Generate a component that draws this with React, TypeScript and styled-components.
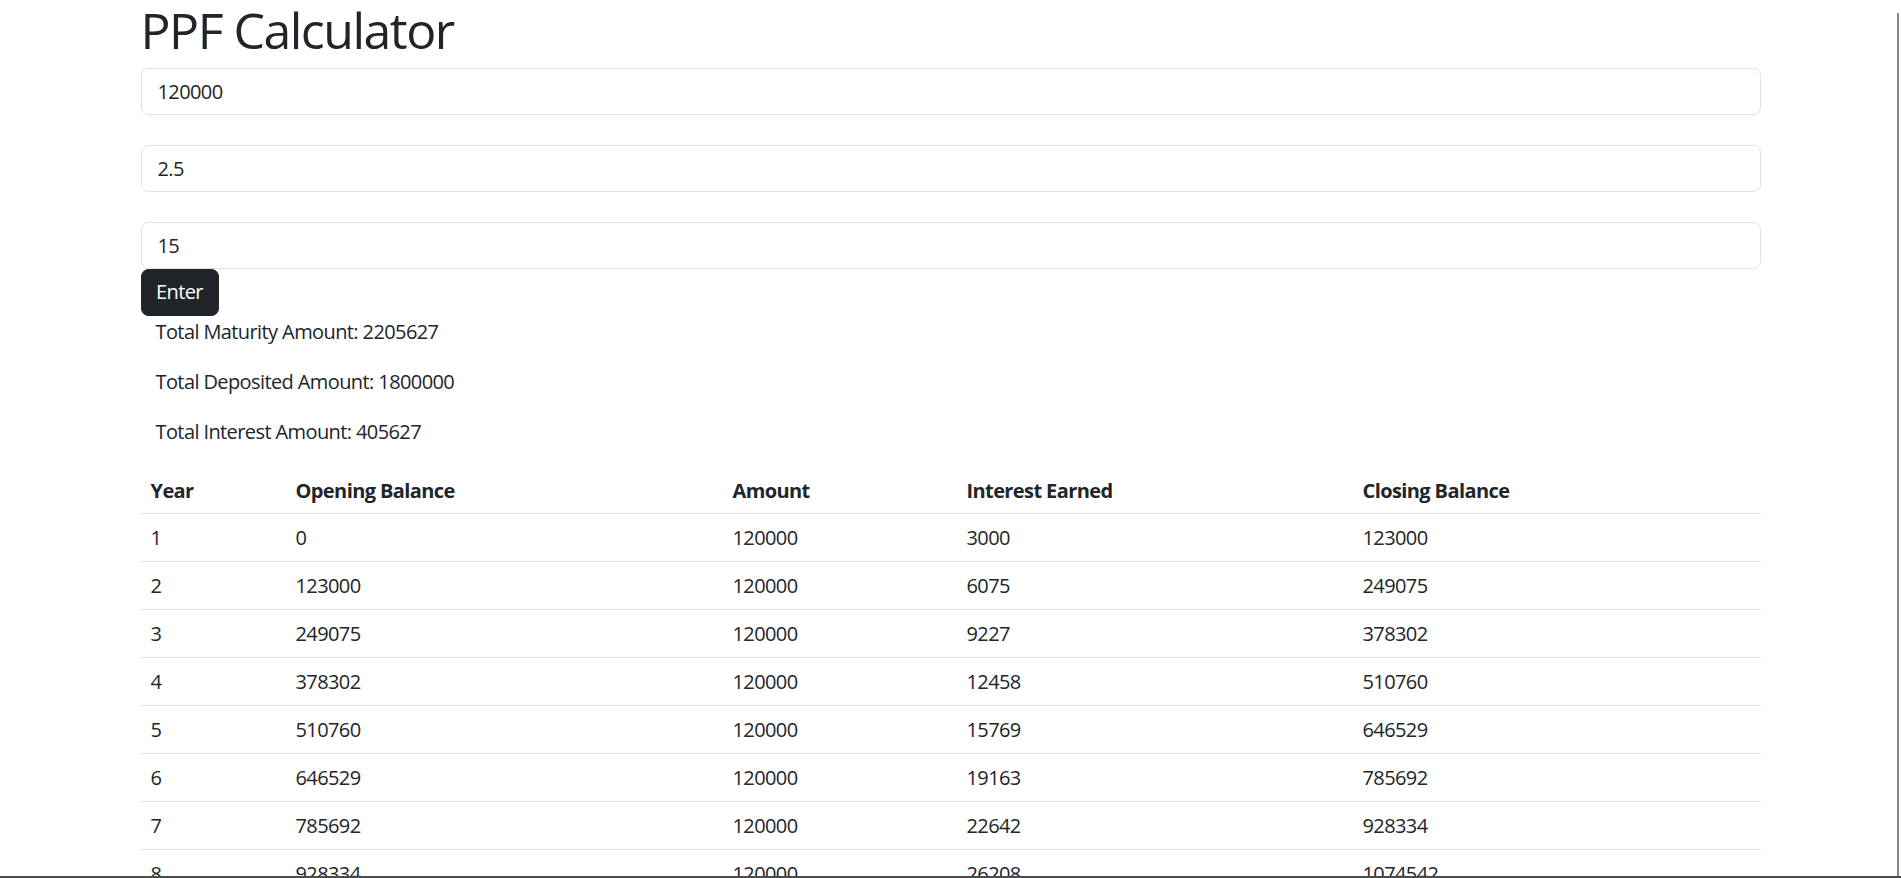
import React from "react";
import styled, { createGlobalStyle } from "styled-components";

const GlobalStyle = createGlobalStyle`
  html { scrollbar-width: none; }
  html::-webkit-scrollbar { display: none; }
  body {
    margin: 0;
    background: #fff;
    color: #212529;
    font-family: "Open Sans", "Noto Sans", sans-serif;
    font-size: 20px;
    line-height: 1.5;
    letter-spacing: -0.03em;
  }
  * { box-sizing: border-box; }
`;

const Container = styled.div`
  width: 1620px;
  margin: 0 auto;
`;

const Title = styled.h1`
  margin: 0 0 8px;
  font-size: 50px;
  font-weight: 400;
  line-height: 60px;
  letter-spacing: -0.03em;
`;

const Field = styled.input<{ $spaced?: boolean }>`
  display: block;
  width: 100%;
  height: 46.6px;
  margin: 0 0 ${(p) => (p.$spaced ? "30.6px" : "0")};
  padding: 0 16px;
  font: inherit;
  letter-spacing: inherit;
  color: #212529;
  background: #fff;
  border: 1px solid #dee2e6;
  border-radius: 7.5px;
  outline: none;
`;

const EnterButton = styled.button`
  display: block;
  width: 78px;
  height: 46.6px;
  padding: 0;
  font: inherit;
  letter-spacing: inherit;
  color: #fff;
  background: #212529;
  border: 1px solid #212529;
  border-radius: 7.5px;
`;

const Summary = styled.div`
  padding: 1.6px 15px 0;
`;

const SummaryLine = styled.p`
  margin: 0 0 20px;
  line-height: 30px;
`;

const Table = styled.table`
  width: 100%;
  table-layout: fixed;
  border-collapse: collapse;
`;

const HeadCell = styled.th<{ $w: number }>`
  width: ${(p) => p.$w}px;
  padding: 8.5px 10px 7.5px;
  line-height: 30px;
  font-weight: 700;
  text-align: left;
  border-bottom: 1px solid #dee2e6;
`;

const Cell = styled.td`
  padding: 8.5px 10px;
  line-height: 30px;
  border-bottom: 1px solid #dee2e6;
`;

const EdgeRight = styled.div`
  position: fixed;
  top: 13px;
  right: 2px;
  bottom: 0;
  width: 2px;
  background: #8a8a8a;
`;

const EdgeBottom = styled.div`
  position: fixed;
  left: 0;
  right: 0;
  bottom: 0;
  height: 2px;
  background: #4d4d4d;
`;

const columns = [
  { label: "Year", w: 145 },
  { label: "Opening Balance", w: 437 },
  { label: "Amount", w: 234 },
  { label: "Interest Earned", w: 396 },
  { label: "Closing Balance", w: 408 },
];

function buildRows(amount: number, rate: number, years: number) {
  const rows: number[][] = [];
  let opening = 0;
  for (let y = 1; y <= years; y++) {
    const interest = Math.round(((opening + amount) * rate) / 100);
    const closing = opening + amount + interest;
    rows.push([y, opening, amount, interest, closing]);
    opening = closing;
  }
  return rows;
}

export default function App() {
  const rows = buildRows(120000, 2.5, 15);
  return (
    <>
      <GlobalStyle />
      <Container>
        <Title>PPF Calculator</Title>
        <Field $spaced defaultValue="120000" />
        <Field $spaced defaultValue="2.5" />
        <Field defaultValue="15" />
        <EnterButton>Enter</EnterButton>
        <Summary>
          <SummaryLine>Total Maturity Amount: 2205627</SummaryLine>
          <SummaryLine>Total Deposited Amount: 1800000</SummaryLine>
          <SummaryLine>Total Interest Amount: 405627</SummaryLine>
        </Summary>
        <Table>
          <thead>
            <tr>
              {columns.map((c) => (
                <HeadCell key={c.label} $w={c.w}>
                  {c.label}
                </HeadCell>
              ))}
            </tr>
          </thead>
          <tbody>
            {rows.map((r) => (
              <tr key={r[0]}>
                {r.map((v, i) => (
                  <Cell key={i}>{v}</Cell>
                ))}
              </tr>
            ))}
          </tbody>
        </Table>
      </Container>
      <EdgeRight />
      <EdgeBottom />
    </>
  );
}
